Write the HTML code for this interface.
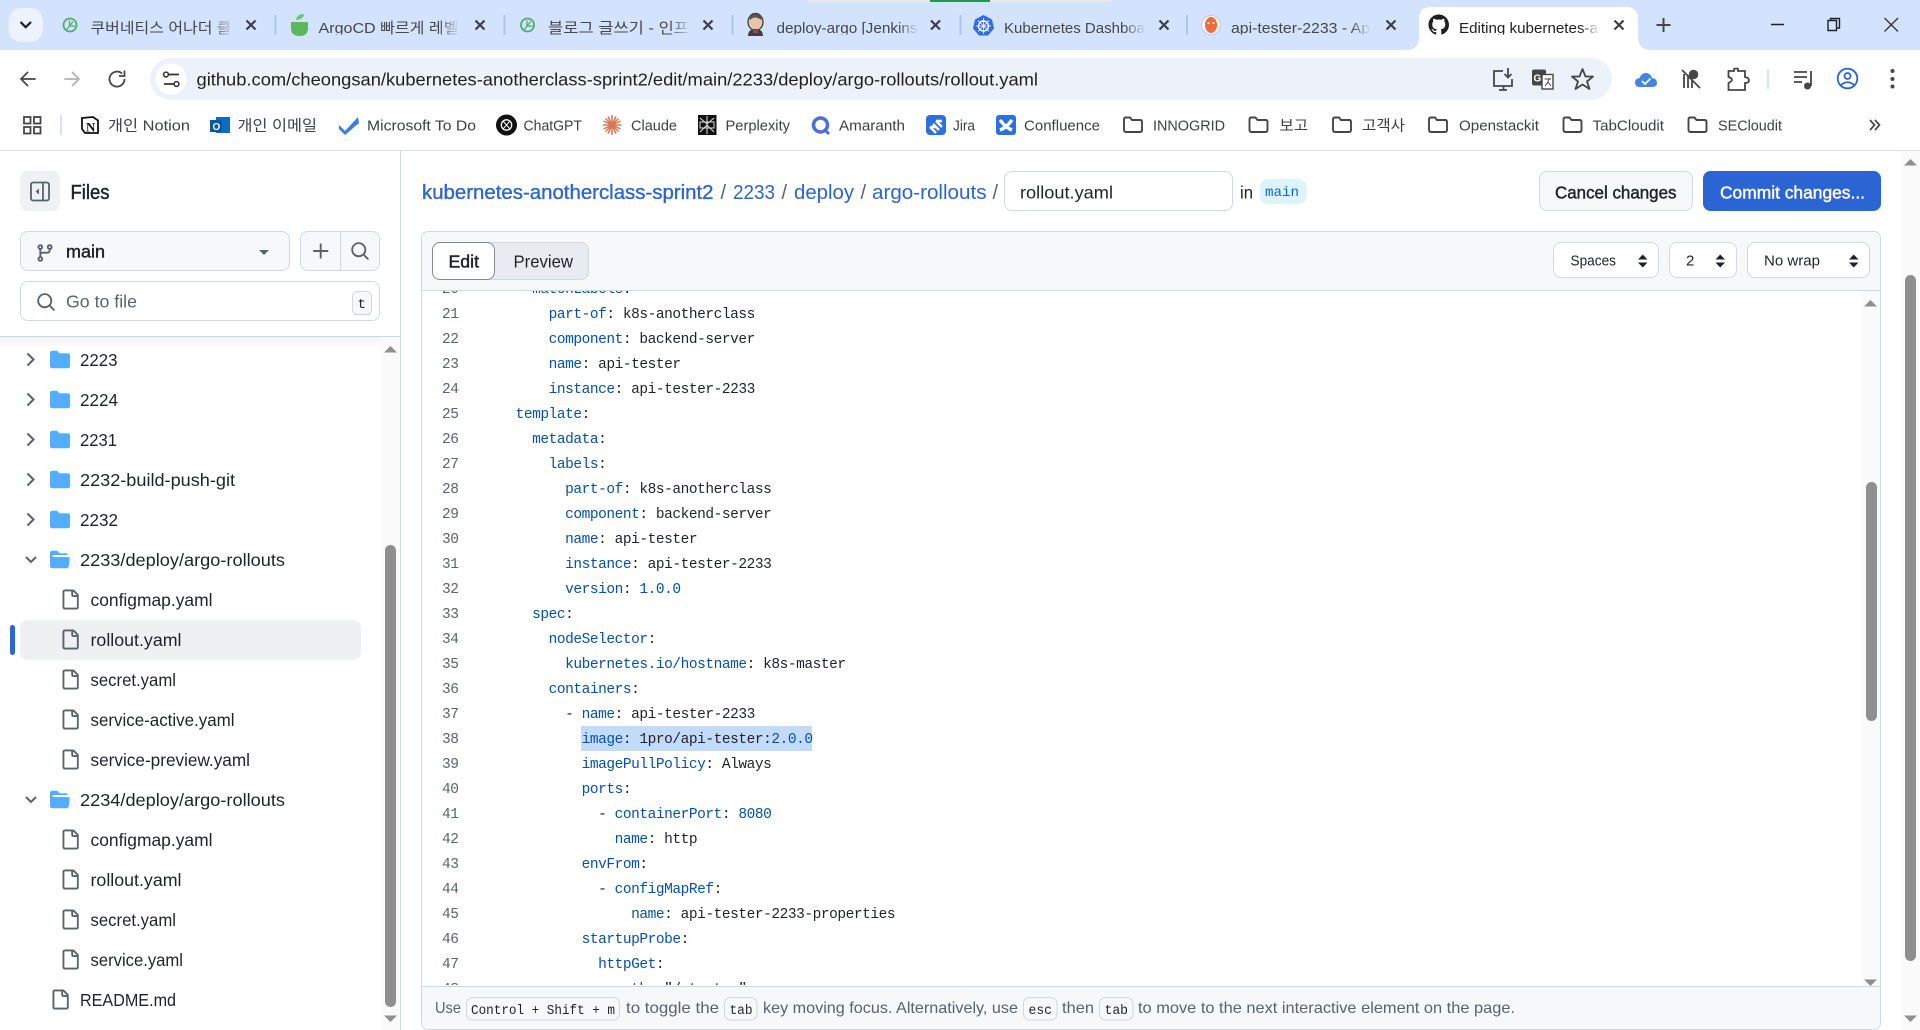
<!DOCTYPE html>
<html lang="ko"><head><meta charset="utf-8"><title>Editing kubernetes-anotherclass-sprint2/2233/deploy/argo-rollouts/rollout.yaml</title>
<style>
html,body{margin:0;padding:0;width:1920px;height:1030px;overflow:hidden;background:#fff}
svg{display:block}
text{white-space:pre}
.s{font-family:"Liberation Sans","Noto Sans CJK KR",sans-serif;font-size:17.5px;fill:#1f2328}
.t{font-family:"Liberation Sans","Noto Sans CJK KR",sans-serif;font-size:15px;fill:#45474a}
.b{font-family:"Liberation Sans","Noto Sans CJK KR",sans-serif;font-size:15px;fill:#3d4043}
.f{font-family:"Liberation Sans",sans-serif;font-size:16px;fill:#59636e}
.B{stroke:#1f2328;stroke-width:.45}
.c{font-family:"Liberation Mono",monospace;font-size:14.5px;letter-spacing:-.45px;fill:#1f2328}
.n{font-family:"Liberation Mono",monospace;font-size:14.5px;letter-spacing:-.45px;fill:#59636e;text-anchor:end}
.k{fill:#0550ae}
.kb{font-family:"Liberation Mono",monospace;font-size:14px;fill:#1f2328}
.bd{fill:#fff;stroke:#d1d9e0;stroke-width:1}
.ln{fill:none;stroke:#45474a;stroke-width:1.8;stroke-linecap:round;stroke-linejoin:round}
.fi{fill:#59636e}
.fo{fill:#54aeff}
</style></head><body>
<svg xmlns="http://www.w3.org/2000/svg" width="1920" height="1030" viewBox="0 0 1920 1030">
<defs>
<linearGradient id="fd"><stop offset="0" stop-color="#d3e3fd" stop-opacity="0"/><stop offset="1" stop-color="#d3e3fd"/></linearGradient>
<linearGradient id="fw"><stop offset="0" stop-color="#fff" stop-opacity="0"/><stop offset="1" stop-color="#fff"/></linearGradient>
<linearGradient id="sh" x1="0" y1="0" x2="0" y2="1"><stop offset="0" stop-color="#000" stop-opacity=".05"/><stop offset="1" stop-color="#000" stop-opacity="0"/></linearGradient>
<clipPath id="cc"><rect x="422" y="291" width="1440" height="694"/></clipPath>
<clipPath id="t1"><rect x="0" y="0" width="1700" height="34.500"/></clipPath>
<path id="file" d="M2 1.75C2 .784 2.784 0 3.75 0h6.586c.464 0 .909.184 1.237.513l2.914 2.914c.329.328.513.773.513 1.237v9.586A1.75 1.75 0 0 1 13.25 16h-9.5A1.75 1.75 0 0 1 2 14.25Zm1.75-.25a.25.25 0 0 0-.25.25v12.5c0 .138.112.25.25.25h9.5a.25.25 0 0 0 .25-.25V6h-2.75A1.75 1.75 0 0 1 9 4.25V1.5Zm6.75.062V4.25c0 .138.112.25.25.25h2.688l-.011-.013-2.914-2.914-.013-.011Z"/>
<path id="fold" d="M1.75 1A1.75 1.75 0 0 0 0 2.75v10.5C0 14.216.784 15 1.75 15h12.5A1.75 1.75 0 0 0 16 13.25v-8.5A1.75 1.75 0 0 0 14.25 3H7.5a.25.25 0 0 1-.2-.1l-.9-1.2C6.07 1.26 5.55 1 5 1H1.75Z"/>
<path id="open" d="M.513 1.513A1.75 1.75 0 0 1 1.75 1h3.5c.55 0 1.07.26 1.4.7l.9 1.2a.25.25 0 0 0 .2.1H13a1 1 0 0 1 1 1v.5H2.75a.75.75 0 0 0 0 1.5h11.978a1 1 0 0 1 .994 1.117L15 13.25A1.75 1.75 0 0 1 13.25 15H1.75A1.75 1.75 0 0 1 0 13.25V2.75c0-.464.184-.91.513-1.237Z"/>
<path id="srch" d="M10.68 11.74a6 6 0 0 1-7.922-8.982 6 6 0 0 1 8.982 7.922l3.04 3.04a.749.749 0 0 1-.326 1.275.749.749 0 0 1-.734-.215ZM11.5 7a4.499 4.499 0 1 0-8.997 0A4.499 4.499 0 0 0 11.5 7Z"/>
<path id="x" d="M-4.5 -4.5L4.500 4.500M4.500 -4.500L-4.500 4.500" fill="none" stroke="#3c4043" stroke-width="2.200"/>
<path id="bf" d="M1 4.5Q1 2.5 3 2.5H7L9 5H17Q19 5 19 7V15Q19 17 17 17H3Q1 17 1 15Z" fill="none" stroke="#444746" stroke-width="1.9"/>
</defs>

<!-- tab strip -->
<rect width="1920" height="50" fill="#d3e3fd"/>
<rect x="808" y="0" width="122" height="2" fill="#e8e8e8"/><rect x="930" y="0" width="60" height="2" fill="#1a9a4a"/><rect x="990" y="0" width="120" height="2" fill="#e8e8e8"/>
<rect x="8.500" y="8" width="34.500" height="34" rx="13" fill="#edf2fc"/>
<path d="M20.500 22L25.700 27.200L31 22" fill="none" stroke="#1f1f1f" stroke-width="2.200"/>
<g fill="#abc7f0"><rect x="274.500" y="15" width="2" height="20"/><rect x="503.500" y="15" width="2" height="20"/><rect x="731.500" y="15" width="2" height="20"/><rect x="959.500" y="15" width="2" height="20"/><rect x="1186" y="15" width="2" height="20"/></g>

<!-- tab 1 -->
<circle cx="70" cy="25" r="6.500" fill="none" stroke="#4caf6a" stroke-width="1.800"/><path d="M66 30.500L73 21.500M69.500 26V20.500M69.500 26H75" fill="none" stroke="#4caf6a" stroke-width="1.200"/>
<g clip-path="url(#t1)"><text class="t" x="90.500" y="33" textLength="141" lengthAdjust="spacingAndGlyphs">쿠버네티스 어나더 클</text></g>
<rect x="212" y="12" width="22" height="30" fill="url(#fd)"/>
<use href="#x" x="251" y="25"/>
<!-- tab 2 -->
<path d="M291 22H308V28Q308 36 299.500 36Q291 36 291 28Z" fill="#5cb85c"/><path d="M296 20Q297 14 304 14Q304 19 296 20Z" fill="#6cc56c"/>
<g clip-path="url(#t1)"><text class="t" x="318.500" y="33" textLength="140" lengthAdjust="spacingAndGlyphs">ArgoCD 빠르게 레벨</text></g>
<rect x="438" y="12" width="22" height="30" fill="url(#fd)"/>
<use href="#x" x="480" y="25"/>
<!-- tab 3 -->
<circle cx="527.500" cy="25" r="6.500" fill="none" stroke="#4caf6a" stroke-width="1.800"/><path d="M523.500 30.500L530.500 21.500M527 26V20.500M527 26H532.500" fill="none" stroke="#4caf6a" stroke-width="1.200"/>
<g clip-path="url(#t1)"><text class="t" x="548" y="33" textLength="141" lengthAdjust="spacingAndGlyphs">블로그 글쓰기 - 인프</text></g>
<rect x="669" y="12" width="22" height="30" fill="url(#fd)"/>
<use href="#x" x="708" y="25"/>
<!-- tab 4 -->
<ellipse cx="755.500" cy="22" rx="7.500" ry="8.500" fill="#e8c5a8" stroke="#333" stroke-width="1.200"/><path d="M749 17Q755 11 762 17L761 20Q755 15 750 20Z" fill="#555"/><path d="M748 36Q748 29 755.500 29Q763 29 763 36Z" fill="#3a3d4d"/><rect x="753" y="30" width="5" height="3" fill="#c0392b"/>
<g clip-path="url(#t1)"><text class="t" x="776.500" y="33" textLength="141" lengthAdjust="spacingAndGlyphs">deploy-argo [Jenkins</text></g>
<rect x="898" y="12" width="21" height="30" fill="url(#fd)"/>
<use href="#x" x="935.500" y="25"/>
<!-- tab 5 -->
<path d="M983.500 15L992 19.500L994 28.500L988 35.500H979L973 28.500L975 19.500Z" fill="#326ce5"/><circle cx="983.500" cy="26" r="5" fill="none" stroke="#fff" stroke-width="1.400"/><path d="M983.500 18V34M976 26H991M978 20.500L989 31.500M989 20.500L978 31.500" stroke="#fff" stroke-width=".8"/>
<g clip-path="url(#t1)"><text class="t" x="1004" y="33" textLength="141" lengthAdjust="spacingAndGlyphs">Kubernetes Dashboa</text></g>
<rect x="1124" y="12" width="22" height="30" fill="url(#fd)"/>
<use href="#x" x="1164" y="25"/>
<!-- tab 6 -->
<circle cx="1211" cy="25" r="9.500" fill="#f4f4f4" stroke="#c8c8d8"/><ellipse cx="1211" cy="25" rx="6" ry="8" fill="#e96d3e"/><circle cx="1208.500" cy="23" r="1" fill="#fff"/><circle cx="1213.500" cy="23" r="1" fill="#fff"/>
<g clip-path="url(#t1)"><text class="t" x="1231" y="33" textLength="139" lengthAdjust="spacingAndGlyphs">api-tester-2233 - Ap</text></g>
<rect x="1350" y="12" width="21" height="30" fill="url(#fd)"/>
<use href="#x" x="1391" y="25"/>
<!-- tab 7 active -->
<path d="M1406 50Q1419 50 1419 37V19Q1419 7 1431 7H1626Q1638 7 1638 19V37Q1638 50 1651 50Z" fill="#fff"/>
<g transform="translate(1428.500 14.500) scale(1.280)"><path fill="#1f1f1f" d="M8 0c4.420 0 8 3.580 8 8a8.013 8.013 0 0 1-5.450 7.590c-.4.080-.55-.17-.55-.38 0-.27.010-1.130.010-2.200 0-.75-.25-1.230-.54-1.480 1.780-.2 3.650-.88 3.650-3.950 0-.88-.31-1.590-.82-2.150.080-.2.360-1.020-.08-2.120 0 0-.67-.22-2.200.82-.64-.18-1.320-.27-2-.27-.68 0-1.360.09-2 .27-1.530-1.030-2.200-.82-2.200-.82-.44 1.100-.16 1.920-.08 2.120-.51.560-.82 1.280-.82 2.150 0 3.060 1.860 3.750 3.640 3.950-.23.2-.44.550-.51 1.070-.46.210-1.610.550-2.330-.66-.15-.24-.6-.83-1.230-.82-.67.010-.27.380.010.530.340.190.730.9.820 1.130.160.450.680 1.310 2.690.94 0 .67.010 1.300.010 1.490 0 .21-.15.450-.55.380A7.995 7.995 0 0 1 0 8c0-4.420 3.580-8 8-8Z"/></g>
<g clip-path="url(#t1)"><text class="t" x="1459" y="33" textLength="139" lengthAdjust="spacingAndGlyphs" style="fill:#1f1f1f">Editing kubernetes-a</text></g>
<rect x="1580" y="12" width="20" height="30" fill="url(#fw)"/>
<use href="#x" x="1619" y="25"/>
<path d="M1663.500 18V32M1656.500 25H1670.500" stroke="#444746" stroke-width="2" fill="none"/>
<path d="M1771 24.500H1784" stroke="#222" stroke-width="1.500"/>
<path d="M1828 20.500H1836.500V30.500H1828ZM1830.500 20.500V18.500H1839.500V28H1836.500" fill="none" stroke="#222" stroke-width="1.400"/>
<path d="M1884.500 18L1898 31.500M1898 18L1884.500 31.500" stroke="#333" stroke-width="1.300"/>

<!-- toolbar -->
<path d="M0 150V62Q0 50 12 50H1908Q1920 50 1920 62V150Z" fill="#fff"/>
<rect x="150" y="58" width="1462" height="42" rx="21" fill="#edf2fa"/>
<path d="M35 79H21M27.500 72.500L21 79L27.500 85.500" class="ln" style="stroke:#444746"/>
<path d="M65 79H79M72.500 72.500L79 79L72.500 85.500" class="ln" style="stroke:#b0b3b6"/>
<path d="M124.500 79A7.500 7.500 0 1 1 122 73.500M124.500 70.500V76H119" fill="none" stroke="#444746" stroke-width="1.800"/>
<circle cx="171" cy="79" r="15.500" fill="#fff"/>
<path d="M169 74.500H179M164 84H174" stroke="#333" stroke-width="1.700"/><circle cx="166" cy="74.500" r="2.400" fill="none" stroke="#333" stroke-width="1.500"/><circle cx="176.500" cy="84" r="2.400" fill="none" stroke="#333" stroke-width="1.500"/>
<text x="196.500" y="85.500" textLength="841.500" lengthAdjust="spacingAndGlyphs" style="font-family:'Liberation Sans',sans-serif;font-size:17.500px;fill:#1f1f1f">github.com/cheongsan/kubernetes-anotherclass-sprint2/edit/main/2233/deploy/argo-rollouts/rollout.yaml</text>
<!-- right icons -->
<path d="M1503 71H1494V86H1512V79M1499 90H1507M1503.500 86V90" fill="none" stroke="#444746" stroke-width="1.800"/><path d="M1508 68V77M1504.500 74L1508 77.500L1511.500 74" fill="none" stroke="#444746" stroke-width="1.800"/>
<rect x="1532" y="69.500" width="14" height="16" rx="2" fill="#444746"/><rect x="1542" y="74.500" width="11" height="14.500" fill="#fff" stroke="#444746" stroke-width="1.400"/><text x="1533.500" y="81.500" style="font-family:'Liberation Sans';font-size:10px;font-weight:700;fill:#fff">G</text><path d="M1544.500 79H1551M1547 84L1549.500 78M1545 86L1548 82L1551 86" stroke="#444746" stroke-width=".9" fill="none"/>
<path d="M1582.500 69L1585.500 76.500H1593L1587 81.500L1589.500 89L1582.500 84.500L1575.500 89L1578 81.500L1572 76.500H1579.500Z" fill="none" stroke="#444746" stroke-width="1.800" stroke-linejoin="round"/>
<path d="M1640 87Q1635 87 1635 82.500Q1635 78.500 1639.500 78Q1641.500 72.500 1647 73Q1651 74 1652 78Q1657 78.500 1657 83Q1657 87 1652 87Z" fill="#4285e0"/><path d="M1642 81L1645 84L1650.500 78.500" fill="none" stroke="#fff" stroke-width="1.800"/>
<path d="M1684 74V88M1688 76V88M1692 80V88M1682 70L1700 88" stroke="#444746" stroke-width="1.800" fill="none"/><circle cx="1693.500" cy="74.500" r="4.800" fill="#444746"/>
<path d="M1728.500 71H1734V69Q1736.500 68 1738 69V71H1745V77Q1749 78 1749 80Q1749 83 1745 83V90H1728.500V83Q1732 81 1732 80Q1732 78 1728.500 77Z" fill="none" stroke="#444746" stroke-width="1.800"/>
<rect x="1767" y="69" width="2" height="20" fill="#d3e3fd"/>
<path d="M1794 72H1807M1794 77H1807M1794 82H1802" stroke="#444746" stroke-width="1.800"/><path d="M1811 71V86" stroke="#444746" stroke-width="1.800"/><circle cx="1807.500" cy="86" r="3.500" fill="#444746"/>
<circle cx="1847.500" cy="78.500" r="9.800" fill="none" stroke="#2b64d3" stroke-width="1.800"/><circle cx="1847.500" cy="76" r="3" fill="none" stroke="#2b64d3" stroke-width="1.800"/><path d="M1841 85Q1847.500 79.500 1854 85" fill="none" stroke="#2b64d3" stroke-width="1.800"/>
<g fill="#444746"><circle cx="1892.500" cy="71" r="2"/><circle cx="1892.500" cy="79" r="2"/><circle cx="1892.500" cy="86.500" r="2"/></g>

<!-- bookmarks -->
<g fill="none" stroke="#444746" stroke-width="1.800"><rect x="24" y="117" width="6.500" height="6.500"/><rect x="34" y="117" width="6.500" height="6.500"/><rect x="24" y="127" width="6.500" height="6.500"/><rect x="34" y="127" width="6.500" height="6.500"/></g>
<rect x="60" y="115" width="2" height="20" fill="#d3e3fd"/>
<path d="M82 118L93 117L98 120.500V133H85L82 129Z" fill="#fff" stroke="#111" stroke-width="1.800"/><text x="86" y="131.500" style="font-family:'Liberation Serif';font-size:13px;font-weight:700;fill:#111">N</text>
<text class="b" x="108" y="130.500" textLength="82" lengthAdjust="spacingAndGlyphs">개인 Notion</text>
<rect x="216" y="117" width="14" height="16" fill="#0f6cbd"/><rect x="210" y="120" width="12" height="12" fill="#0a58a5"/><text x="212.500" y="130" style="font-family:'Liberation Sans';font-size:10px;font-weight:700;fill:#fff">O</text>
<text class="b" x="237.500" y="130.500" textLength="79.500" lengthAdjust="spacingAndGlyphs">개인 이메일</text>
<path d="M339 125L345 131L358 117L359 123L345 135L339 129Z" fill="#3b7de0"/>
<text class="b" x="367" y="130.500" textLength="109" lengthAdjust="spacingAndGlyphs">Microsoft To Do</text>
<circle cx="506.500" cy="125" r="10.500" fill="#111"/><circle cx="506.500" cy="125" r="5.200" fill="none" stroke="#fff" stroke-width="1.300"/><path d="M503 121L510 129M510 121L503 129" stroke="#fff" stroke-width="1"/>
<text class="b" x="523.500" y="130.500" textLength="58.500" lengthAdjust="spacingAndGlyphs">ChatGPT</text>
<path d="M612 115V135M603 125H621.500M605.500 118.500L618.500 131.500M618.500 118.500L605.500 131.500M608 116.500L616 133.500M616 116.500L608 133.500M603.500 121L620.500 129M620.500 121L603.500 129" stroke="#d97757" stroke-width="1.500"/>
<text class="b" x="631" y="130.500" textLength="46" lengthAdjust="spacingAndGlyphs">Claude</text>
<rect x="698" y="115" width="18.500" height="20" fill="#111"/><path d="M707 116V134M700 118L707 124L714 118M700 132L707 125L714 132M700 122H714V128H700Z" fill="none" stroke="#ddd" stroke-width="1"/>
<text class="b" x="725.500" y="130.500" textLength="64.500" lengthAdjust="spacingAndGlyphs">Perplexity</text>
<circle cx="820.500" cy="125" r="7" fill="none" stroke="#4a6ee0" stroke-width="3.500"/><path d="M824 129L829 134" stroke="#4a6ee0" stroke-width="3"/>
<text class="b" x="839" y="130.500" textLength="66" lengthAdjust="spacingAndGlyphs">Amaranth</text>
<rect x="926" y="115" width="20" height="20" rx="4" fill="#2b6fe0"/><path d="M930 127L936 133M936 121L942 127M933 124L939 130M936 121H942M930 127H936" stroke="#fff" stroke-width="2.400" fill="none"/>
<text class="b" x="953" y="130.500" textLength="22" lengthAdjust="spacingAndGlyphs">Jira</text>
<rect x="996" y="115" width="20" height="20" rx="3" fill="#2b6fe0"/><path d="M1000 120Q1006 128 1012 130M1012 120Q1006 128 1000 130" stroke="#fff" stroke-width="3.400" fill="none"/>
<text class="b" x="1024" y="130.500" textLength="76" lengthAdjust="spacingAndGlyphs">Confluence</text>
<use href="#bf" x="1123" y="115"/><text class="b" x="1153" y="130.500" textLength="72" lengthAdjust="spacingAndGlyphs">INNOGRID</text>
<use href="#bf" x="1248.500" y="115"/><text class="b" x="1279.500" y="130.500" textLength="28.500" lengthAdjust="spacingAndGlyphs">보고</text>
<use href="#bf" x="1332" y="115"/><text class="b" x="1362" y="130.500" textLength="43" lengthAdjust="spacingAndGlyphs">고객사</text>
<use href="#bf" x="1428" y="115"/><text class="b" x="1459" y="130.500" textLength="80" lengthAdjust="spacingAndGlyphs">Openstackit</text>
<use href="#bf" x="1562.500" y="115"/><text class="b" x="1592.500" y="130.500" textLength="71.500" lengthAdjust="spacingAndGlyphs">TabCloudit</text>
<use href="#bf" x="1687.500" y="115"/><text class="b" x="1718" y="130.500" textLength="64" lengthAdjust="spacingAndGlyphs">SECloudit</text>
<path d="M1870 120L1874.500 125L1870 130M1875 120L1879.500 125L1875 130" fill="none" stroke="#444746" stroke-width="1.700"/>
<rect x="0" y="150" width="1920" height="1" fill="#dcdfe3"/>

<!-- sidebar -->
<rect x="400" y="151" width="1" height="879" fill="#d1d9e0"/>
<rect x="20" y="171" width="40" height="40" rx="7.500" fill="#eff2f5"/>
<rect x="31" y="182.500" width="18" height="18" rx="2" fill="none" stroke="#59636e" stroke-width="1.800"/><path d="M43 182.500V200.500" stroke="#59636e" stroke-width="1.800"/><path d="M39 188.500V194.500L35.500 191.500Z" fill="#59636e"/>
<text class="s B" x="70.500" y="199" textLength="39" lengthAdjust="spacingAndGlyphs" style="font-size:20px">Files</text>
<rect x="20.500" y="231.500" width="269" height="39" rx="7.500" fill="#f6f8fa" stroke="#d1d9e0"/>
<g transform="translate(35 243) scale(1.250)" class="fi"><path d="M9.500 3.250a2.250 2.250 0 1 1 3 2.122V6A2.500 2.500 0 0 1 10 8.500H6a1 1 0 0 0-1 1v1.128a2.251 2.251 0 1 1-1.500 0V5.372a2.250 2.250 0 1 1 1.500 0v1.836A2.493 2.493 0 0 1 6 7h4a1 1 0 0 0 1-1v-.628A2.250 2.250 0 0 1 9.500 3.250Zm-6 0a.75.75 0 1 0 1.500 0 .75.75 0 0 0-1.500 0Zm8.250-.75a.75.75 0 1 0 0 1.500.75.75 0 0 0 0-1.500ZM4.250 12a.75.75 0 1 0 0 1.500.75.75 0 0 0 0-1.500Z"/></g>
<text class="s B" x="66" y="257.500" textLength="39" lengthAdjust="spacingAndGlyphs">main</text>
<path d="M259 250H269L264 255Z" fill="#59636e"/>
<rect x="300.500" y="231.500" width="79" height="39" rx="7.500" fill="#f6f8fa" stroke="#d1d9e0"/><rect x="340" y="232" width="1" height="38" fill="#d1d9e0"/>
<path d="M320.700 243.500V258.500M313.200 251H328.200" stroke="#59636e" stroke-width="1.900"/>
<use href="#srch" transform="translate(350 241) scale(1.250)" class="fi"/>
<rect x="20.500" y="281.500" width="359" height="39" rx="7.500" fill="#fff" stroke="#d1d9e0"/>
<use href="#srch" transform="translate(36 292) scale(1.250)" class="fi"/>
<text class="f" x="66" y="307.500" textLength="71" lengthAdjust="spacingAndGlyphs" style="font-size:17.500px">Go to file</text>
<rect x="352.500" y="291.500" width="19" height="23" rx="5" fill="#f6f8fa" stroke="#d1d9e0"/><path d="M354 314.500H370" stroke="#d1d9e0" stroke-width="1.500"/>
<text class="kb" x="357.500" y="308">t</text>
<rect x="0" y="336" width="400" height="1" fill="#d1d9e0"/>
<rect x="381" y="337" width="19" height="693" fill="#fafafa"/>
<rect x="0" y="337" width="381" height="12" fill="url(#sh)"/>
<path d="M384 352.500L390.500 346L397 352.500Z" fill="#8f8f8f"/>
<rect x="385" y="545" width="11" height="462" rx="5.500" fill="#8f8f8f"/>
<path d="M384 1015.500L390.500 1022L397 1015.500Z" fill="#8f8f8f"/>

<rect x="20" y="620" width="341" height="40" rx="8" fill="#eff0f2"/>
<rect x="10" y="625" width="5" height="30" rx="2.500" fill="#2b64d3"/>
<g transform="translate(0 -.5)">
<g fill="none" stroke="#59636e" stroke-width="2"><path d="M27.500 354L33.500 360L27.500 366M27.500 394L33.500 400L27.500 406M27.500 434L33.500 440L27.500 446M27.500 474L33.500 480L27.500 486M27.500 514L33.500 520L27.500 526M26 557.500L31 562.500L36 557.500M26 797.500L31 802.500L36 797.500"/></g>
<g class="fo">
<use href="#fold" transform="translate(50 350) scale(1.250)"/><use href="#fold" transform="translate(50 390) scale(1.250)"/><use href="#fold" transform="translate(50 430) scale(1.250)"/><use href="#fold" transform="translate(50 470) scale(1.250)"/><use href="#fold" transform="translate(50 510) scale(1.250)"/>
<use href="#open" transform="translate(50 550) scale(1.250)"/><use href="#open" transform="translate(50 790) scale(1.250)"/>
</g>
<g class="fi">
<use href="#file" transform="translate(60 590) scale(1.250)"/><use href="#file" transform="translate(60 630) scale(1.250)"/><use href="#file" transform="translate(60 670) scale(1.250)"/><use href="#file" transform="translate(60 710) scale(1.250)"/><use href="#file" transform="translate(60 750) scale(1.250)"/>
<use href="#file" transform="translate(60 830) scale(1.250)"/><use href="#file" transform="translate(60 870) scale(1.250)"/><use href="#file" transform="translate(60 910) scale(1.250)"/><use href="#file" transform="translate(60 950) scale(1.250)"/><use href="#file" transform="translate(50 990) scale(1.250)"/>
</g>
<text class="s" x="80" y="366.500" textLength="37.500" lengthAdjust="spacingAndGlyphs">2223</text>
<text class="s" x="80" y="406.500" textLength="38" lengthAdjust="spacingAndGlyphs">2224</text>
<text class="s" x="80" y="446.500" textLength="37" lengthAdjust="spacingAndGlyphs">2231</text>
<text class="s" x="80" y="486.500" textLength="155" lengthAdjust="spacingAndGlyphs">2232-build-push-git</text>
<text class="s" x="80" y="526.500" textLength="38" lengthAdjust="spacingAndGlyphs">2232</text>
<text class="s" x="80" y="566.500" textLength="205" lengthAdjust="spacingAndGlyphs">2233/deploy/argo-rollouts</text>
<text class="s" x="90.500" y="606.500" textLength="122" lengthAdjust="spacingAndGlyphs">configmap.yaml</text>
<text class="s" x="90.500" y="646.500" textLength="91" lengthAdjust="spacingAndGlyphs">rollout.yaml</text>
<text class="s" x="90.500" y="686.500" textLength="85.500" lengthAdjust="spacingAndGlyphs">secret.yaml</text>
<text class="s" x="90.500" y="726.500" textLength="144" lengthAdjust="spacingAndGlyphs">service-active.yaml</text>
<text class="s" x="90.500" y="766.500" textLength="159.500" lengthAdjust="spacingAndGlyphs">service-preview.yaml</text>
<text class="s" x="80" y="806.500" textLength="205" lengthAdjust="spacingAndGlyphs">2234/deploy/argo-rollouts</text>
<text class="s" x="90.500" y="846.500" textLength="122" lengthAdjust="spacingAndGlyphs">configmap.yaml</text>
<text class="s" x="90.500" y="886.500" textLength="91" lengthAdjust="spacingAndGlyphs">rollout.yaml</text>
<text class="s" x="90.500" y="926.500" textLength="85.500" lengthAdjust="spacingAndGlyphs">secret.yaml</text>
<text class="s" x="90.500" y="966.500" textLength="92.500" lengthAdjust="spacingAndGlyphs">service.yaml</text>
<text class="s" x="80" y="1006.500" textLength="96" lengthAdjust="spacingAndGlyphs">README.md</text>
</g>

<!-- header -->
<text class="s" x="422" y="199" textLength="291.500" lengthAdjust="spacingAndGlyphs" style="font-size:20px;fill:#2b64d3;stroke:#2b64d3;stroke-width:.35">kubernetes-anotherclass-sprint2</text>
<text class="s" x="720.500" y="199" style="font-size:20px;fill:#59636e">/</text>
<text class="s" x="733" y="199" textLength="42" lengthAdjust="spacingAndGlyphs" style="font-size:20px;fill:#2b64d3">2233</text>
<text class="s" x="781.500" y="199" style="font-size:20px;fill:#59636e">/</text>
<text class="s" x="794" y="199" textLength="60" lengthAdjust="spacingAndGlyphs" style="font-size:20px;fill:#2b64d3">deploy</text>
<text class="s" x="860.500" y="199" style="font-size:20px;fill:#59636e">/</text>
<text class="s" x="872" y="199" textLength="114.500" lengthAdjust="spacingAndGlyphs" style="font-size:20px;fill:#2b64d3">argo-rollouts</text>
<text class="s" x="992.500" y="199" style="font-size:20px;fill:#59636e">/</text>
<rect x="1004.500" y="171.500" width="228" height="39" rx="7.500" class="bd"/>
<text class="s" x="1020" y="198.500" textLength="93" lengthAdjust="spacingAndGlyphs">rollout.yaml</text>
<text class="s" x="1240" y="198.500" textLength="13" lengthAdjust="spacingAndGlyphs">in</text>
<rect x="1260" y="179" width="46.500" height="25" rx="7.500" fill="#ddf4ff"/>
<text x="1265" y="196" textLength="34" lengthAdjust="spacingAndGlyphs" style="font-family:'Liberation Mono',monospace;font-size:14px;fill:#0969da">main</text>
<rect x="1539.500" y="171.500" width="153" height="39" rx="7.500" fill="#f6f8fa" stroke="#d1d9e0"/>
<text class="s B" x="1555" y="198.500" textLength="121.500" lengthAdjust="spacingAndGlyphs">Cancel changes</text>
<rect x="1703" y="171" width="178" height="40" rx="7.500" fill="#2b64d3"/>
<text class="s" x="1720" y="198.500" textLength="145" lengthAdjust="spacingAndGlyphs" style="fill:#fff;stroke:#fff;stroke-width:.45">Commit changes...</text>

<!-- editor frame -->
<path d="M421.500 986V239Q421.500 231.500 429 231.500H1873Q1880.500 231.500 1880.500 239V1022Q1880.500 1029.500 1873 1029.500H429Q421.500 1029.500 421.500 1022Z" fill="#fff" stroke="#d1d9e0"/>
<path d="M422 290V239Q422 232 429 232H1873Q1880 232 1880 239V290Z" fill="#f6f8fa"/>
<rect x="422" y="290" width="1458" height="1" fill="#d1d9e0"/>
<rect x="432.500" y="242.500" width="156" height="37" rx="7.500" fill="#e8ebef" stroke="#d1d9e0"/>
<rect x="432.500" y="242.500" width="62" height="37" rx="7.500" fill="#fff" stroke="#818b98"/>
<text class="s B" x="448.500" y="267.500" textLength="30.500" lengthAdjust="spacingAndGlyphs">Edit</text>
<text class="s" x="513.500" y="267.500" textLength="59.500" lengthAdjust="spacingAndGlyphs">Preview</text>
<g fill="#fff" stroke="#d1d9e0"><rect x="1553.500" y="242.500" width="105" height="35" rx="7.500"/><rect x="1669.500" y="242.500" width="67" height="35" rx="7.500"/><rect x="1747.500" y="242.500" width="122" height="35" rx="7.500"/></g>
<text class="s" x="1570.500" y="265.500" textLength="45.500" lengthAdjust="spacingAndGlyphs" style="font-size:15px">Spaces</text>
<text class="s" x="1686" y="265.500" style="font-size:15px">2</text>
<text class="s" x="1764" y="265.500" textLength="56" lengthAdjust="spacingAndGlyphs" style="font-size:15px">No wrap</text>
<g fill="#1f2328"><path d="M1638 259.500L1642.700 254.500L1647.500 259.500ZM1638 262.500L1642.700 267.500L1647.500 262.500Z"/><path d="M1715.500 259.500L1720.200 254.500L1725 259.500ZM1715.500 262.500L1720.200 267.500L1725 262.500Z"/><path d="M1849 259.500L1853.700 254.500L1858.500 259.500ZM1849 262.500L1853.700 267.500L1858.500 262.500Z"/></g>

<!-- code -->
<rect x="581" y="726" width="231" height="25" fill="#c2dbfb"/>
<g clip-path="url(#cc)">
<text class="n" x="458.500" y="293">20</text><text class="c" x="482.600" y="293">      <tspan class="k">matchLabels</tspan>:</text>
<text class="n" x="458.500" y="318">21</text><text class="c" x="482.600" y="318">        <tspan class="k">part-of</tspan>: k8s-anotherclass</text>
<text class="n" x="458.500" y="343">22</text><text class="c" x="482.600" y="343">        <tspan class="k">component</tspan>: backend-server</text>
<text class="n" x="458.500" y="368">23</text><text class="c" x="482.600" y="368">        <tspan class="k">name</tspan>: api-tester</text>
<text class="n" x="458.500" y="393">24</text><text class="c" x="482.600" y="393">        <tspan class="k">instance</tspan>: api-tester-2233</text>
<text class="n" x="458.500" y="418">25</text><text class="c" x="482.600" y="418">    <tspan class="k">template</tspan>:</text>
<text class="n" x="458.500" y="443">26</text><text class="c" x="482.600" y="443">      <tspan class="k">metadata</tspan>:</text>
<text class="n" x="458.500" y="468">27</text><text class="c" x="482.600" y="468">        <tspan class="k">labels</tspan>:</text>
<text class="n" x="458.500" y="493">28</text><text class="c" x="482.600" y="493">          <tspan class="k">part-of</tspan>: k8s-anotherclass</text>
<text class="n" x="458.500" y="518">29</text><text class="c" x="482.600" y="518">          <tspan class="k">component</tspan>: backend-server</text>
<text class="n" x="458.500" y="543">30</text><text class="c" x="482.600" y="543">          <tspan class="k">name</tspan>: api-tester</text>
<text class="n" x="458.500" y="568">31</text><text class="c" x="482.600" y="568">          <tspan class="k">instance</tspan>: api-tester-2233</text>
<text class="n" x="458.500" y="593">32</text><text class="c" x="482.600" y="593">          <tspan class="k">version</tspan>: <tspan class="k">1.0.0</tspan></text>
<text class="n" x="458.500" y="618">33</text><text class="c" x="482.600" y="618">      <tspan class="k">spec</tspan>:</text>
<text class="n" x="458.500" y="643">34</text><text class="c" x="482.600" y="643">        <tspan class="k">nodeSelector</tspan>:</text>
<text class="n" x="458.500" y="668">35</text><text class="c" x="482.600" y="668">          <tspan class="k">kubernetes.io/hostname</tspan>: k8s-master</text>
<text class="n" x="458.500" y="693">36</text><text class="c" x="482.600" y="693">        <tspan class="k">containers</tspan>:</text>
<text class="n" x="458.500" y="718">37</text><text class="c" x="482.600" y="718">          - <tspan class="k">name</tspan>: api-tester-2233</text>
<text class="n" x="458.500" y="743">38</text><text class="c" x="482.600" y="743">            <tspan class="k">image</tspan>: 1pro/api-tester:<tspan class="k">2.0.0</tspan></text>
<text class="n" x="458.500" y="768">39</text><text class="c" x="482.600" y="768">            <tspan class="k">imagePullPolicy</tspan>: Always</text>
<text class="n" x="458.500" y="793">40</text><text class="c" x="482.600" y="793">            <tspan class="k">ports</tspan>:</text>
<text class="n" x="458.500" y="818">41</text><text class="c" x="482.600" y="818">              - <tspan class="k">containerPort</tspan>: <tspan class="k">8080</tspan></text>
<text class="n" x="458.500" y="843">42</text><text class="c" x="482.600" y="843">                <tspan class="k">name</tspan>: http</text>
<text class="n" x="458.500" y="868">43</text><text class="c" x="482.600" y="868">            <tspan class="k">envFrom</tspan>:</text>
<text class="n" x="458.500" y="893">44</text><text class="c" x="482.600" y="893">              - <tspan class="k">configMapRef</tspan>:</text>
<text class="n" x="458.500" y="918">45</text><text class="c" x="482.600" y="918">                  <tspan class="k">name</tspan>: api-tester-2233-properties</text>
<text class="n" x="458.500" y="943">46</text><text class="c" x="482.600" y="943">            <tspan class="k">startupProbe</tspan>:</text>
<text class="n" x="458.500" y="968">47</text><text class="c" x="482.600" y="968">              <tspan class="k">httpGet</tspan>:</text>
<text class="n" x="458.500" y="993">48</text><text class="c" x="482.600" y="993">                <tspan class="k">path</tspan>: "/startup"</text>
</g>
<rect x="1862" y="291" width="18" height="695" fill="#fafafa"/>
<path d="M1864 306.500L1870.500 300L1877 306.500Z" fill="#8f8f8f"/>
<rect x="1866" y="482" width="11" height="239" rx="5.500" fill="#8f8f8f"/>
<path d="M1864 979.500L1870.500 986L1877 979.500Z" fill="#8f8f8f"/>

<!-- footer -->
<path d="M422 986H1880V1022Q1880 1029 1873 1029H429Q422 1029 422 1022Z" fill="#f6f8fa"/>
<rect x="422" y="986" width="1458" height="1" fill="#d1d9e0"/>
<text class="f" x="435" y="1013" textLength="26" lengthAdjust="spacingAndGlyphs">Use</text>
<g fill="#f6f8fa" stroke="#d1d9e0"><rect x="466.500" y="997.500" width="153" height="22.500" rx="6"/><rect x="724.500" y="997.500" width="32.500" height="22.500" rx="6"/><rect x="1023.500" y="997.500" width="33.500" height="22.500" rx="6"/><rect x="1099.500" y="997.500" width="33.500" height="22.500" rx="6"/></g>
<text class="kb" x="471" y="1014" textLength="144" lengthAdjust="spacingAndGlyphs">Control + Shift + m</text>
<text class="f" x="626" y="1013" textLength="93" lengthAdjust="spacingAndGlyphs">to toggle the</text>
<text class="kb" x="729.500" y="1014" textLength="23" lengthAdjust="spacingAndGlyphs">tab</text>
<text class="f" x="763" y="1013" textLength="255" lengthAdjust="spacingAndGlyphs">key moving focus. Alternatively, use</text>
<text class="kb" x="1028.500" y="1014" textLength="23.500" lengthAdjust="spacingAndGlyphs">esc</text>
<text class="f" x="1062" y="1013" textLength="32" lengthAdjust="spacingAndGlyphs">then</text>
<text class="kb" x="1104.500" y="1014" textLength="23.500" lengthAdjust="spacingAndGlyphs">tab</text>
<text class="f" x="1138" y="1013" textLength="377" lengthAdjust="spacingAndGlyphs">to move to the next interactive element on the page.</text>

<!-- page scrollbar -->
<rect x="1902" y="151" width="18" height="879" fill="#fafafa"/>
<path d="M1904 165.500L1910.500 159L1917 165.500Z" fill="#8f8f8f"/>
<rect x="1905" y="275" width="11" height="686" rx="5.500" fill="#8f8f8f"/>
<path d="M1904 1015.500L1910.500 1022L1917 1015.500Z" fill="#8f8f8f"/>
</svg>
</body></html>
